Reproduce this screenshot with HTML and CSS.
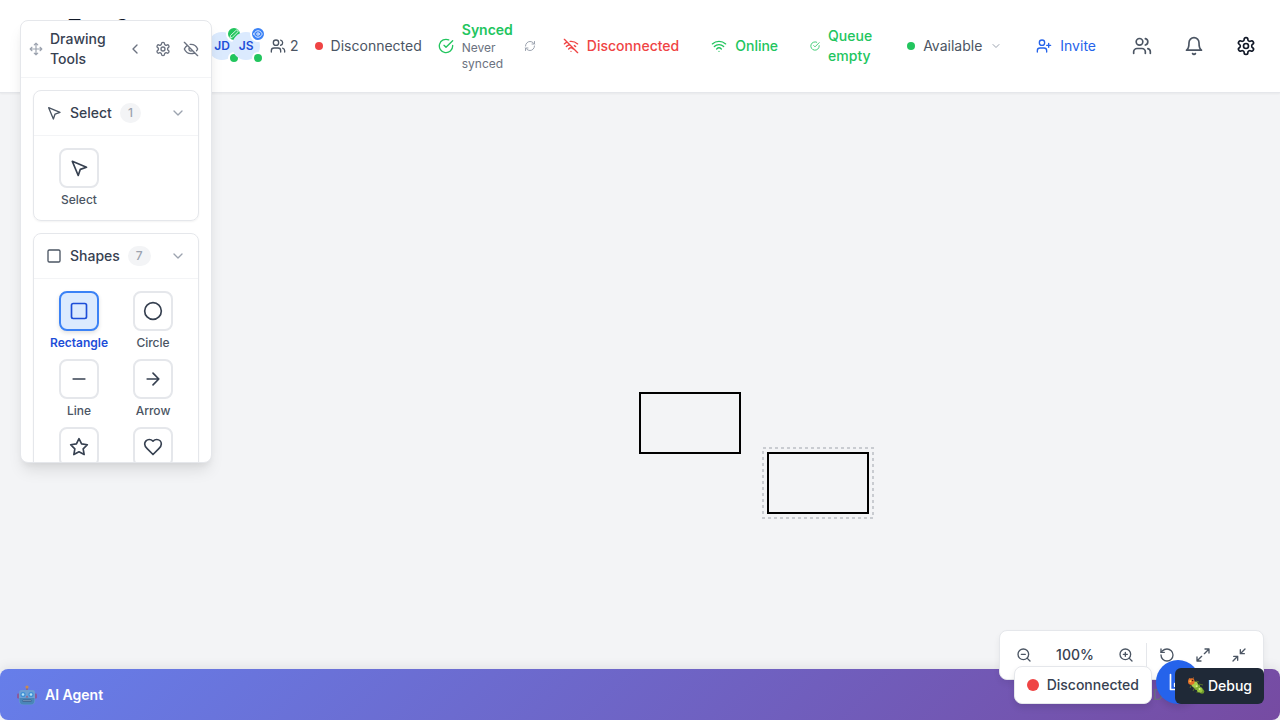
FILE: index.html
```html
<!DOCTYPE html>
<html lang="en">
<head>
<meta charset="utf-8">
<title>Test Canvas</title>
<link rel="stylesheet" href="styles.css">
</head>
<body>
<svg class="sprite" aria-hidden="true">
  <symbol id="i-users" viewBox="0 0 24 24"><path d="M16 21v-2a4 4 0 0 0-4-4H6a4 4 0 0 0-4 4v2"/><circle cx="9" cy="7" r="4"/><path d="M22 21v-2a4 4 0 0 0-3-3.87M16 3.13a4 4 0 0 1 0 7.75"/></symbol>
  <symbol id="i-check" viewBox="0 0 24 24"><path d="M22 11.08V12a10 10 0 1 1-5.93-9.14"/><path d="m9 11 3 3L22 4"/></symbol>
  <symbol id="i-refresh" viewBox="0 0 24 24"><path d="M3 12a9 9 0 0 1 9-9 9.75 9.75 0 0 1 6.74 2.74L21 8"/><path d="M21 3v5h-5M21 12a9 9 0 0 1-9 9 9.75 9.75 0 0 1-6.74-2.74L3 16"/><path d="M8 16H3v5"/></symbol>
  <symbol id="i-wifi" viewBox="0 0 24 24"><path d="M12 20h.01M2 8.82a15 15 0 0 1 20 0M5 12.859a10 10 0 0 1 14 0M8.500 16.429a5 5 0 0 1 7 0"/></symbol>
  <symbol id="i-wifi-off" viewBox="0 0 24 24"><path d="M12 20h.01M8.500 16.429a5 5 0 0 1 7 0M5 12.859a10 10 0 0 1 5.170-2.690M19 12.859a10 10 0 0 0-2.007-1.523M2 8.820a15 15 0 0 1 4.177-2.643M22 8.820a15 15 0 0 0-11.288-3.764M2 2l20 20"/></symbol>
  <symbol id="i-down" viewBox="0 0 24 24"><path d="m6 9 6 6 6-6"/></symbol>
  <symbol id="i-left" viewBox="0 0 24 24"><path d="m15 18-6-6 6-6"/></symbol>
  <symbol id="i-invite" viewBox="0 0 24 24"><path d="M16 21v-2a4 4 0 0 0-4-4H6a4 4 0 0 0-4 4v2"/><circle cx="9" cy="7" r="4"/><path d="M19 8v6M22 11h-6"/></symbol>
  <symbol id="i-bell" viewBox="0 0 24 24"><path d="M6 8a6 6 0 0 1 12 0c0 7 3 9 3 9H3s3-2 3-9M10.300 21a1.940 1.940 0 0 0 3.400 0"/></symbol>
  <symbol id="i-gear" viewBox="0 0 24 24"><path d="M12.22 2h-.44a2 2 0 0 0-2 2v.18a2 2 0 0 1-1 1.730l-.43.25a2 2 0 0 1-2 0l-.15-.08a2 2 0 0 0-2.730.73l-.22.38a2 2 0 0 0 .73 2.730l.15.1a2 2 0 0 1 1 1.720v.51a2 2 0 0 1-1 1.740l-.15.09a2 2 0 0 0-.73 2.730l.22.38a2 2 0 0 0 2.730.73l.15-.08a2 2 0 0 1 2 0l.43.25a2 2 0 0 1 1 1.730V20a2 2 0 0 0 2 2h.44a2 2 0 0 0 2-2v-.18a2 2 0 0 1 1-1.730l.43-.25a2 2 0 0 1 2 0l.15.08a2 2 0 0 0 2.730-.73l.22-.39a2 2 0 0 0-.73-2.730l-.15-.08a2 2 0 0 1-1-1.740v-.5a2 2 0 0 1 1-1.740l.15-.09a2 2 0 0 0 .73-2.730l-.22-.38a2 2 0 0 0-2.730-.73l-.15.08a2 2 0 0 1-2 0l-.43-.25a2 2 0 0 1-1-1.730V4a2 2 0 0 0-2-2z"/><circle cx="12" cy="12" r="3"/></symbol>
  <symbol id="i-eye-off" viewBox="0 0 24 24"><path d="M9.880 9.880a3 3 0 1 0 4.240 4.240M10.730 5.080A10.430 10.430 0 0 1 12 5c7 0 10 7 10 7a13.160 13.160 0 0 1-1.670 2.680M6.610 6.610A13.526 13.526 0 0 0 2 12s3 7 10 7a9.740 9.740 0 0 0 5.390-1.610M2 2l20 20"/></symbol>
  <symbol id="i-eye" viewBox="0 0 24 24"><path d="M2 12s3-8 10-8 10 8 10 8-3 8-10 8-10-8-10-8Z"/><circle cx="12" cy="12" r="3"/></symbol>
  <symbol id="i-pen" viewBox="0 0 24 24"><path d="M17 3a2.850 2.830 0 1 1 4 4L7.500 20.500 2 22l1.500-5.500Z"/></symbol>
  <symbol id="i-move" viewBox="0 0 24 24"><path d="m5 9-3 3 3 3M9 5l3-3 3 3M15 19l-3 3-3-3M19 9l3 3-3 3M2 12h20M12 2v20"/></symbol>
  <symbol id="i-pointer" viewBox="0 0 24 24"><path d="m4 4 7.070 17 2.510-7.390L21 11.070z"/></symbol>
  <symbol id="i-square" viewBox="0 0 24 24"><rect x="3" y="3" width="18" height="18" rx="2"/></symbol>
  <symbol id="i-circle" viewBox="0 0 24 24"><circle cx="12" cy="12" r="10"/></symbol>
  <symbol id="i-line" viewBox="0 0 24 24"><path d="M5 12h14"/></symbol>
  <symbol id="i-arrow" viewBox="0 0 24 24"><path d="M5 12h14M12 5l7 7-7 7"/></symbol>
  <symbol id="i-star" viewBox="0 0 24 24"><path d="m12 2 3.090 6.260L22 9.270l-5 4.870 1.180 6.880L12 17.770l-6.180 3.250L7 14.140 2 9.270l6.910-1.010L12 2z"/></symbol>
  <symbol id="i-heart" viewBox="0 0 24 24"><path d="M19 14c1.490-1.460 3-3.210 3-5.500A5.500 5.500 0 0 0 16.500 3c-1.760 0-3 .5-4.500 2-1.500-1.500-2.740-2-4.500-2A5.500 5.500 0 0 0 2 8.500c0 2.300 1.500 4.050 3 5.500l7 7Z"/></symbol>
  <symbol id="i-zoom-out" viewBox="0 0 24 24"><circle cx="11" cy="11" r="8"/><path d="m21 21-4.350-4.350M8 11h6"/></symbol>
  <symbol id="i-zoom-in" viewBox="0 0 24 24"><circle cx="11" cy="11" r="8"/><path d="m21 21-4.350-4.350M11 8v6M8 11h6"/></symbol>
  <symbol id="i-reset" viewBox="0 0 24 24"><path d="M3 12a9 9 0 1 0 9-9 9.750 9.750 0 0 0-6.740 2.740L3 8"/><path d="M3 3v5h5"/></symbol>
  <symbol id="i-max" viewBox="0 0 24 24"><path d="M15 3h6v6M9 21H3v-6M21 3l-7 7M3 21l7-7"/></symbol>
  <symbol id="i-min" viewBox="0 0 24 24"><path d="M4 14h6v6M20 10h-6V4M14 10l7-7M3 21l7-7"/></symbol>
  <symbol id="i-chart" viewBox="0 0 24 24"><path d="M3 3v18h18M18 17V9M13 17V5M8 17v-3"/></symbol>
</svg>

<div class="app">
  <header class="topbar">
    <div class="doc">
      <h1 class="doc-title">Test Canvas</h1>
    </div>

    <div class="people">
      <div class="avatars">
        <div class="avatar">JD
          <span class="role role-edit"><svg class="icon s10"><use href="#i-pen"/></svg></span>
          <span class="presence"></span>
        </div>
        <div class="avatar">JS
          <span class="role role-view"><svg class="icon s10"><use href="#i-eye"/></svg></span>
          <span class="presence"></span>
        </div>
      </div>
      <div class="count"><svg class="icon s16"><use href="#i-users"/></svg>2</div>
    </div>

    <div class="status"><span class="dot red"></span>Disconnected</div>

    <div class="status sync">
      <svg class="icon s16 good"><use href="#i-check"/></svg>
      <div class="sync-text"><strong class="good">Synced</strong><span class="sub">Never synced</span></div>
      <button class="plain" aria-label="Sync now"><svg class="icon s12"><use href="#i-refresh"/></svg></button>
    </div>

    <div class="status padded bad"><svg class="icon s16"><use href="#i-wifi-off"/></svg>Disconnected</div>
    <div class="status padded good"><svg class="icon s16"><use href="#i-wifi"/></svg>Online</div>
    <div class="status padded good"><svg class="icon s10"><use href="#i-check"/></svg><span class="queue-text">Queue empty</span></div>

    <button class="available"><span class="dot green"></span>Available<svg class="icon s12"><use href="#i-down"/></svg></button>
    <button class="invite"><svg class="icon s16"><use href="#i-invite"/></svg>Invite</button>

    <button class="square" aria-label="Collaborators"><svg class="icon s20"><use href="#i-users"/></svg></button>
    <button class="square" aria-label="Notifications"><svg class="icon s20"><use href="#i-bell"/></svg></button>
    <button class="square dark" aria-label="Settings"><svg class="icon s20"><use href="#i-gear"/></svg></button>
  </header>

  <main class="canvas">
    <svg class="drawing" role="img" aria-label="Two rectangles">
      <rect class="shape" x="640" y="300" width="100" height="60"/>
      <rect class="shape" x="768" y="360" width="100" height="60"/>
      <rect class="selection" x="763" y="355" width="110" height="70"/>
    </svg>
  </main>

  <footer class="agent">
    <svg class="robot" viewBox="0 0 20 20" aria-hidden="true">
      <path d="M10 2v4" stroke="#7a6f9a" stroke-width="2"/>
      <circle cx="10" cy="2" r="1.600" fill="#c98a52"/>
      <rect x="0" y="8.500" width="3" height="5" rx="1.200" fill="#8c5a9c"/>
      <rect x="17" y="8.500" width="3" height="5" rx="1.200" fill="#8c5a9c"/>
      <path d="M4.500 5h11q2.500 0 2.500 3v7q0 4.500-4 4.500H6q-4 0-4-4.500V8q0-3 2.500-3z" fill="#6d9fd2"/>
      <path d="M2.500 13h15v2q0 4.500-4 4.500h-7q-4 0-4-4.500z" fill="#4a86b8"/>
      <circle cx="6" cy="9.500" r="2.600" fill="#3f8fd6"/>
      <circle cx="14" cy="9.500" r="2.600" fill="#3f8fd6"/>
      <circle cx="6" cy="9.500" r="1.300" fill="#b5e4f5"/>
      <circle cx="14" cy="9.500" r="1.300" fill="#b5e4f5"/>
      <path d="M10 10.500l1.300 2H8.700z" fill="#9c5a78"/>
      <rect x="5.500" y="14.500" width="9" height="2.500" rx="1" fill="#3a5f8f"/>
      <path d="M6.500 15.700h7" stroke="#b7cbe6" stroke-dasharray="1 1"/>
    </svg>
    <span>AI Agent</span>
  </footer>
</div>

<aside class="panel">
  <div class="panel-head">
    <svg class="icon s14 faint"><use href="#i-move"/></svg>
    <h2 class="panel-title">Drawing Tools</h2>
    <div class="panel-actions">
      <button class="mini" aria-label="Collapse"><svg class="icon s16"><use href="#i-left"/></svg></button>
      <button class="mini" aria-label="Panel settings"><svg class="icon s16"><use href="#i-gear"/></svg></button>
      <button class="mini" aria-label="Hide panel"><svg class="icon s16"><use href="#i-eye-off"/></svg></button>
    </div>
  </div>
  <div class="panel-body">
    <section class="group">
      <button class="group-head"><svg class="icon s16"><use href="#i-pointer"/></svg>Select<span class="badge">1</span><svg class="icon s16 faint end"><use href="#i-down"/></svg></button>
      <div class="tools">
        <button class="tool"><span class="tile"><svg class="icon s20"><use href="#i-pointer"/></svg></span>Select</button>
      </div>
    </section>
    <section class="group">
      <button class="group-head"><svg class="icon s16"><use href="#i-square"/></svg>Shapes<span class="badge">7</span><svg class="icon s16 faint end"><use href="#i-down"/></svg></button>
      <div class="tools">
        <button class="tool active"><span class="tile"><svg class="icon s20"><use href="#i-square"/></svg></span>Rectangle</button>
        <button class="tool"><span class="tile"><svg class="icon s20"><use href="#i-circle"/></svg></span>Circle</button>
        <button class="tool"><span class="tile"><svg class="icon s20"><use href="#i-line"/></svg></span>Line</button>
        <button class="tool"><span class="tile"><svg class="icon s20"><use href="#i-arrow"/></svg></span>Arrow</button>
        <button class="tool" aria-label="Star"><span class="tile"><svg class="icon s20"><use href="#i-star"/></svg></span></button>
        <button class="tool" aria-label="Heart"><span class="tile"><svg class="icon s20"><use href="#i-heart"/></svg></span></button>
      </div>
    </section>
  </div>
</aside>

<div class="zoombar">
  <button class="zoom" aria-label="Zoom out"><svg class="icon s16"><use href="#i-zoom-out"/></svg></button>
  <span class="level">100%</span>
  <button class="zoom" aria-label="Zoom in"><svg class="icon s16"><use href="#i-zoom-in"/></svg></button>
  <span class="divider"></span>
  <button class="zoom" aria-label="Reset zoom"><svg class="icon s16"><use href="#i-reset"/></svg></button>
  <button class="zoom" aria-label="Fit to screen"><svg class="icon s16"><use href="#i-max"/></svg></button>
  <button class="zoom" aria-label="Actual size"><svg class="icon s16"><use href="#i-min"/></svg></button>
</div>

<span class="hint">D</span>
<div class="connection"><span class="dot large red"></span>Disconnected</div>
<button class="stats" aria-label="Statistics"><svg class="icon s20"><use href="#i-chart"/></svg></button>
<button class="debug">
  <svg class="bug" viewBox="0 0 18 18" aria-hidden="true">
    <path d="M5 7l-2 4M8 10l-2 4M11 12l-1 4M9 4l3 1M12 7l4 1" stroke="#54702a" stroke-width="1"/>
    <circle cx="15" cy="14.500" r="2.300" fill="#6f9a2c"/>
    <circle cx="12.800" cy="12.800" r="2.800" fill="#9cc93f"/>
    <circle cx="10.300" cy="10.300" r="3" fill="#7fae33"/>
    <circle cx="7.800" cy="7.600" r="3.100" fill="#a8d04a"/>
    <circle cx="12.500" cy="12" r="1" fill="#dcef8a"/>
    <circle cx="9.700" cy="9.200" r="1" fill="#dcef8a"/>
    <path d="M2 1l1.500 2M6.500 0.500L5.500 3" stroke="#b0662b" stroke-width="1"/>
    <circle cx="4.300" cy="4.600" r="3.300" fill="#e2702a"/>
    <circle cx="3.400" cy="4.200" r="1" fill="#ffd34d"/>
    <circle cx="5.600" cy="3.500" r="0.800" fill="#3b1d10"/>
  </svg>
  Debug
</button>
</body>
</html>
```

FILE: styles.css
```css
* { box-sizing: border-box; }

body {
  margin: 0;
  font: 14px/20px Inter, "Liberation Sans", sans-serif;
  color: #374151;
  background: #f3f4f6;
  overflow: hidden;
}

h1, h2 { margin: 0; }

button {
  font: inherit;
  color: inherit;
  background: none;
  border: 0;
  padding: 0;
  margin: 0;
  cursor: pointer;
}

.sprite { position: absolute; width: 0; height: 0; }

.icon {
  display: block;
  flex: none;
  fill: none;
  stroke: currentColor;
  stroke-width: 2;
  stroke-linecap: round;
  stroke-linejoin: round;
}
.s10 { width: 10px; height: 10px; }
.s12 { width: 12px; height: 12px; }
.s14 { width: 14px; height: 14px; }
.s16 { width: 16px; height: 16px; }
.s20 { width: 20px; height: 20px; }

.good { color: #22c55e; }
.bad { color: #ef4444; }
.faint { color: #9ca3af; }

.dot { flex: none; width: 8px; height: 8px; border-radius: 50%; }
.dot.large { width: 12px; height: 12px; }
.red { background: #ef4444; }
.green { background: #22c55e; }

.app { display: flex; flex-direction: column; height: 100vh; }

.topbar {
  display: flex;
  align-items: center;
  gap: 16px;
  min-height: 93px;
  padding: 12px 16px;
  background: #fff;
  border-bottom: 1px solid #e5e7eb;
  box-shadow: 0 1px 2px rgba(0, 0, 0, 0.05);
  z-index: 1;
}
.doc { flex: 1; align-self: stretch; min-width: 0; padding-left: 52px; }
.doc-title {
  font-size: 20px;
  line-height: 30px;
  font-weight: 600;
  color: #111827;
  white-space: nowrap;
}

.people { display: flex; align-items: center; gap: 10px; }
.avatars { display: flex; }
.avatar {
  position: relative;
  width: 28px;
  height: 28px;
  border-radius: 50%;
  background: #dbeafe;
  color: #1d4ed8;
  font-size: 12px;
  line-height: 28px;
  font-weight: 600;
  text-align: center;
}
.avatar + .avatar { margin-left: -4px; }
.role {
  position: absolute;
  top: -6px;
  right: -6px;
  display: grid;
  place-items: center;
  width: 16px;
  height: 16px;
  border: 2px solid #fff;
  border-radius: 50%;
  color: #fff;
}
.role-edit { background: #22c55e; }
.role-view { background: #3b82f6; }
.presence {
  position: absolute;
  right: -4px;
  bottom: -4px;
  width: 12px;
  height: 12px;
  border: 2px solid #fff;
  border-radius: 50%;
  background: #22c55e;
}
.count { display: flex; align-items: center; gap: 4px; color: #4b5563; }

.status { display: flex; align-items: center; gap: 8px; color: #4b5563; }
.status.padded { padding: 0 8px; font-weight: 500; }
.status.good { color: #22c55e; }
.status.bad { color: #ef4444; }
.sync-text { display: flex; flex-direction: column; width: min-content; }
.sync-text strong { font-weight: 600; }
.sub { font-size: 12px; line-height: 16px; color: #6b7280; }
.plain { color: #9ca3af; padding: 3px; }
.queue-text { width: min-content; }

.available, .invite { display: flex; align-items: center; gap: 8px; color: #4b5563; }
.available { padding: 8px 6px 8px 11px; }
.available .icon { color: #9ca3af; }
.invite { padding: 8px 12px; color: #2563eb; }
.square { display: grid; place-items: center; width: 36px; height: 36px; color: #4b5563; }
.square.dark { color: #111827; }

.canvas { flex: 1; min-height: 0; display: flex; }
.drawing { flex: 1; overflow: visible; }
.shape { fill: none; stroke: #000; stroke-width: 2; }
.selection { fill: none; stroke: #c9ccd1; stroke-width: 2; stroke-dasharray: 3 3; }

.agent {
  display: flex;
  align-items: center;
  gap: 8px;
  min-height: 51px;
  padding: 12px 17px;
  border-radius: 8px;
  background: linear-gradient(135deg, #667eea, #764ba2);
  box-shadow: 0 -2px 12px rgba(0, 0, 0, 0.08);
  color: #fff;
  font-weight: 600;
}
.robot { display: block; width: 20px; height: 20px; fill: none; }

.panel {
  position: absolute;
  top: 20px;
  left: 20px;
  display: flex;
  flex-direction: column;
  width: 192px;
  max-height: calc(100vh - 277px);
  background: #fff;
  border: 1px solid #e5e7eb;
  border-radius: 8px;
  box-shadow: 0 10px 15px -3px rgba(0, 0, 0, 0.1), 0 4px 6px -2px rgba(0, 0, 0, 0.05);
  overflow: hidden;
  z-index: 2;
}
.panel-head {
  display: flex;
  flex: none;
  align-items: center;
  gap: 7px;
  padding: 8px;
  border-bottom: 1px solid #f3f4f6;
}
.panel-title { flex: 1; font-size: 14px; line-height: 20px; font-weight: 500; }
.panel-actions { display: flex; gap: 4px; }
.mini { display: grid; place-items: center; width: 24px; height: 24px; color: #6b7280; }
.panel-body {
  display: flex;
  flex-direction: column;
  gap: 12px;
  min-height: 0;
  padding: 12px;
  overflow: hidden;
}
.group {
  flex: none;
  border: 1px solid #e5e7eb;
  border-radius: 8px;
  box-shadow: 0 1px 2px rgba(0, 0, 0, 0.05);
}
.group-head {
  display: flex;
  align-items: center;
  gap: 8px;
  width: 100%;
  padding: 12px;
  border-bottom: 1px solid #f3f4f6;
  font-weight: 500;
}
.group-head .icon { color: #4b5563; }
.group-head .end { margin-left: auto; color: #9ca3af; }
.badge {
  padding: 2px 8px;
  border-radius: 10px;
  background: #f3f4f6;
  color: #9ca3af;
  font-size: 12px;
  line-height: 16px;
}
.tools { display: grid; grid-template-columns: 1fr 1fr; gap: 8px; padding: 12px; }
.tool {
  display: flex;
  flex-direction: column;
  align-items: center;
  gap: 4px;
  color: #4b5563;
  font-size: 12px;
  line-height: 16px;
  font-weight: 500;
}
.tile {
  display: grid;
  place-items: center;
  width: 40px;
  height: 40px;
  border: 2px solid #e5e7eb;
  border-radius: 8px;
  color: #374151;
}
.tool.active { color: #1d4ed8; font-weight: 600; }
.tool.active .tile {
  border-color: #3b82f6;
  background: #dbeafe;
  color: #1d4ed8;
  box-shadow: 0 2px 4px rgba(0, 0, 0, 0.12);
}

.zoombar {
  position: absolute;
  right: 16px;
  bottom: 40px;
  display: flex;
  align-items: center;
  gap: 4px;
  padding: 8px;
  background: #fff;
  border: 1px solid #e5e7eb;
  border-radius: 8px;
  box-shadow: 0 4px 6px rgba(0, 0, 0, 0.06);
  z-index: 2;
}
.zoom { display: grid; place-items: center; width: 32px; height: 32px; color: #4b5563; }
.level { width: 62px; text-align: center; font-weight: 500; }
.divider { width: 1px; height: 24px; background: #e5e7eb; }

.hint {
  position: absolute;
  right: 117px;
  bottom: 15px;
  color: #6b7280;
  z-index: 2;
}
.connection {
  position: absolute;
  right: 128px;
  bottom: 16px;
  display: flex;
  align-items: center;
  gap: 8px;
  padding: 8px 12px;
  background: #fff;
  border: 1px solid #e5e7eb;
  border-radius: 8px;
  box-shadow: 0 4px 6px rgba(0, 0, 0, 0.1);
  font-weight: 500;
  z-index: 3;
}
.stats {
  position: absolute;
  right: 80px;
  bottom: 16px;
  display: grid;
  place-items: center;
  width: 44px;
  height: 44px;
  border-radius: 50%;
  background: #2563eb;
  color: #fff;
  box-shadow: 0 4px 6px rgba(0, 0, 0, 0.1);
  z-index: 3;
}
.debug {
  position: absolute;
  right: 16px;
  bottom: 16px;
  display: flex;
  align-items: center;
  gap: 3px;
  padding: 8px 12px;
  border-radius: 6px;
  background: #1f2937;
  color: #fff;
  font-weight: 500;
  z-index: 4;
}
.bug { display: block; width: 18px; height: 18px; fill: none; }
```
